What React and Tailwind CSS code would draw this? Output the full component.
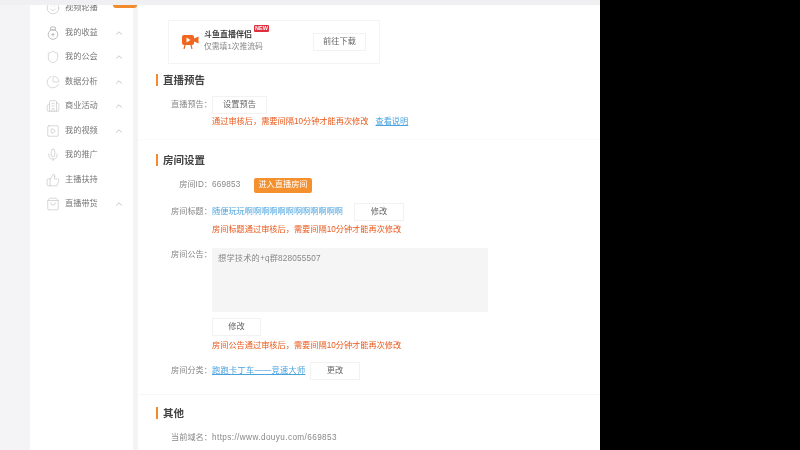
import React from "react";
import {
  Smile,
  Shield,
  ChartPie,
  Building2,
  SquarePlay,
  Mic,
  ThumbsUp,
  ShoppingBag,
  ChevronUp,
} from "lucide-react";

const font = { fontFamily: '"Liberation Sans", "Noto Sans CJK SC", sans-serif' };

function MoneyBag({ size, strokeWidth, className }) {
  return (
    <svg width={size} height={size} viewBox="0 0 14 14" fill="none" stroke="currentColor" strokeWidth={strokeWidth} className={className}>
      <rect x="4.5" y="1" width="5" height="3" rx="1" />
      <circle cx="7" cy="8.5" r="4.8" />
      <path d="M5.5 8.5h3M7 7v3.5" />
    </svg>
  );
}

const menu = [
  { name: "视频轮播", icon: Smile },
  { name: "我的收益", icon: MoneyBag, arrow: true },
  { name: "我的公会", icon: Shield, arrow: true },
  { name: "数据分析", icon: ChartPie, arrow: true },
  { name: "商业活动", icon: Building2, arrow: true },
  { name: "我的视频", icon: SquarePlay, arrow: true },
  { name: "我的推广", icon: Mic },
  { name: "主播扶持", icon: ThumbsUp },
  { name: "直播带货", icon: ShoppingBag, arrow: true },
];

function Heading({ children }) {
  return (
    <div className="flex items-center gap-[5px] h-[14px]">
      <div className="w-[2px] h-[12px] bg-[#f08c2e]" />
      <div className="text-[10.5px] font-bold text-[#444] leading-none">{children}</div>
    </div>
  );
}

function Label({ children }) {
  return <div className="w-[56px] shrink-0 text-right text-[#888]">{children}</div>;
}

function Btn({ w, children }) {
  return (
    <div className={`${w} h-[18px] shrink-0 flex items-center justify-center border border-[#f2f2f2] bg-white text-[#666]`}>
      {children}
    </div>
  );
}

function Warn({ children }) {
  return <span className="text-[#e8591c]">{children}</span>;
}

export default function App() {
  return (
    <div className="w-[800px] h-[450px] overflow-hidden bg-black" style={font}>
      <div className="w-[600px] h-[450px] overflow-hidden flex flex-col bg-[#f4f4f6] blur-[0.6px]">
        <div className="h-[5px] shrink-0 bg-[#f0f0f2] relative z-10" />
        <div className="flex flex-1 pl-[30px] gap-[5px] min-h-0">
          {/* sidebar */}
          <div className="w-[103px] shrink-0 bg-white relative">
            <div className="-mt-[9px]">
              {menu.map((m) => {
                const Icon = m.icon;
                return (
                  <div key={m.name} className="h-[24.5px] flex items-center pl-[16px] pr-[9px] text-[8.2px] text-[#777]">
                    <Icon size={14} strokeWidth={1} className="text-[#bbb] shrink-0" />
                    <span className="ml-[5px] flex-1">{m.name}</span>
                    {m.arrow && <ChevronUp size={10} className="text-[#bbb]" />}
                  </div>
                );
              })}
            </div>
            <div className="absolute left-[83px] -top-[1px] w-[24px] h-[4px] rounded-b-[3px] bg-[#f08c2e]" />
          </div>

          {/* main */}
          <div className="flex-1 bg-white pl-[18px] text-[8.2px] leading-none">
            <div className="ml-[12px] mt-[15px] w-[212px] h-[44px] border border-[#f4f4f4] flex items-center pl-[13px]">
              <svg width="17" height="16" viewBox="0 0 17 16" className="shrink-0">
                <rect x="0" y="1" width="12" height="10" rx="2" fill="#f0661f" />
                <path d="M12 4.5 16.5 2.5V9.5L12 7.5Z" fill="#f0661f" />
                <path d="M4.5 3.5 8.5 6 4.5 8.5Z" fill="#fff" />
                <path d="M3 11 2 15M9 11 10 15" stroke="#f0661f" strokeWidth="1.2" />
              </svg>
              <div className="ml-[5px] w-[109px] relative -mt-[2px]">
                <div className="text-[8px] font-bold text-[#444]">斗鱼直播伴侣</div>
                <div className="mt-[4px] text-[7.8px] text-[#888]">仅需填1次推流码</div>
                <div className="absolute left-[50px] -top-[6px] px-[1px] h-[7px] flex items-center rounded-[1px] bg-[#e0303f] text-white text-[5.5px] font-bold">NEW</div>
              </div>
              <div className="w-[53px] h-[18px] flex items-center justify-center border border-[#f2f2f2] text-[#666]">前往下载</div>
            </div>

            <div className="mt-[9px]"><Heading>直播预告</Heading></div>
            <div className="mt-[9px] flex items-center">
              <Label>直播预告：</Label>
              <Btn w="w-[55px]">设置预告</Btn>
            </div>
            <div className="ml-[56px] mt-[4px] h-[9px] flex">
              <Warn>通过审核后，需要间隔10分钟才能再次修改</Warn>
              <span className="ml-[7px] text-[#4aa3df] underline">查看说明</span>
            </div>

            <div className="mt-[12px] -ml-[18px] border-t border-[#fbfbfb]" />
            <div className="mt-[13px]"><Heading>房间设置</Heading></div>
            <div className="mt-[10px] flex items-center h-[16px]">
              <Label>房间ID：</Label>
              <span className="text-[#888] w-[42px] tracking-[0.2px]">669853</span>
              <div className="w-[58px] h-[15px] rounded-[2px] bg-[#f5902e] text-white flex items-center justify-center">进入直播房间</div>
            </div>
            <div className="mt-[10px] flex items-center">
              <Label>房间标题：</Label>
              <span className="w-[142px] text-[#4aa3df] whitespace-nowrap">随便玩玩啊啊啊啊啊啊啊啊啊啊啊啊</span>
              <Btn w="w-[50px]">修改</Btn>
            </div>
            <div className="ml-[56px] mt-[5px] h-[9px]"><Warn>房间标题通过审核后，需要间隔10分钟才能再次修改</Warn></div>

            <div className="mt-[13px] flex">
              <div className="pt-[3px]"><Label>房间公告：</Label></div>
              <div className="w-[276px] h-[64px] bg-[#f5f5f5] px-[6px] py-[7px] text-[#888] tracking-[0.2px]">想学技术的+q群828055507</div>
            </div>
            <div className="ml-[56px] mt-[6px]"><Btn w="w-[49px]">修改</Btn></div>
            <div className="ml-[56px] mt-[6px] h-[9px]"><Warn>房间公告通过审核后，需要间隔10分钟才能再次修改</Warn></div>

            <div className="mt-[11px] flex items-center">
              <Label>房间分类：</Label>
              <span className="w-[98px] text-[#4aa3df] underline whitespace-nowrap tracking-[0.3px]">跑跑卡丁车——竞速大师</span>
              <Btn w="w-[50px]">更改</Btn>
            </div>

            <div className="mt-[14px] -ml-[18px] border-t border-[#f7f7f7]" />
            <div className="mt-[11px]"><Heading>其他</Heading></div>
            <div className="mt-[14px] flex items-center">
              <Label>当前域名：</Label>
              <span className="text-[#888] tracking-[0.4px]">https://www.douyu.com/669853</span>
            </div>
          </div>
        </div>
      </div>
    </div>
  );
}
